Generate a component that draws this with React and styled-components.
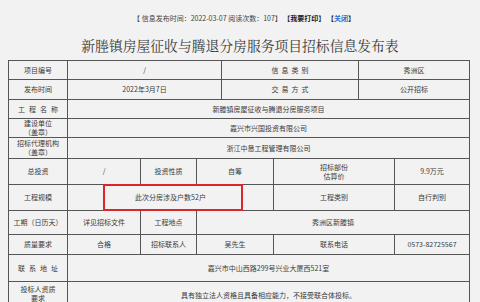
import React from "react";
import styled, { createGlobalStyle } from "styled-components";

const Global = createGlobalStyle`
  html, body { margin: 0; padding: 0; background: #f2f2f2; }
  body { font-family: "Noto Sans CJK SC", "Liberation Sans", sans-serif; color: #333; }
`;

const Page = styled.div`
  width: 480px;
  height: 302px;
  overflow: hidden;
  padding-top: 13px;
  box-sizing: border-box;
`;

const InfoLine = styled.div`
  text-align: center;
  font-size: 7px;
  line-height: 10px;
  color: #444;
  padding-left: 8px;
`;

const Strong = styled.span`
  font-weight: bold;
  color: #222;
`;

const Blue = styled.span`
  color: #2a6fd0;
`;

const Title = styled.h1`
  margin: 0;
  padding: 14px 0 7px 0;
  text-align: center;
  font-family: "Noto Serif CJK SC", "Noto Sans CJK SC", serif;
  font-weight: normal;
  font-size: 13.8px;
  line-height: 16px;
  color: #3a3a3a;
`;

const Table = styled.div`
  margin-left: 8px;
  width: 461px;
  border-top: 1px solid #555;
  border-left: 1px solid #555;
`;

const Row = styled.div`
  display: grid;
  grid-template-columns: ${(p) => p.cols};
  height: ${(p) => p.h}px;
`;

const Cell = styled.div`
  position: relative;
  display: flex;
  align-items: ${(p) => (p.top ? "flex-start" : "center")};
  padding-top: ${(p) => (p.top ? "3px" : "0")};
  justify-content: center;
  text-align: center;
  border-right: 1px solid #555;
  border-bottom: 1px solid #555;
  font-size: 7px;
  line-height: 9px;
  color: #3a3a3a;
  white-space: pre-line;
  box-sizing: border-box;
`;

const Spaced = styled.span`
  letter-spacing: ${(p) => p.gap || 4}px;
  margin-right: -${(p) => p.gap || 4}px;
`;

const Highlight = styled.div`
  position: absolute;
  left: 35px;
  width: 140px;
  top: -1px;
  bottom: -1px;
  border: 2px solid #d8262b;
  box-sizing: border-box;
`;

const Four = "59px 154px 137px 111px";
const Two = "59px 402px";
const Six = "59px 73px 56px 77px 121px 75px";

export default function App() {
  return (
    <Page>
      <Global />
      <InfoLine>
        【 信息发布时间：2022-03-07 阅读次数：107】 <Strong>【我要打印】</Strong>{" "}
        <Strong>【<Blue>关闭</Blue>】</Strong>
      </InfoLine>
      <Title>新塍镇房屋征收与腾退分房服务项目招标信息发布表</Title>
      <Table>
        <Row cols={Four} h={19}>
          <Cell>项目编号</Cell>
          <Cell>/</Cell>
          <Cell><Spaced gap={3}>信息类别</Spaced></Cell>
          <Cell>秀洲区</Cell>
        </Row>
        <Row cols={Four} h={20}>
          <Cell>发布时间</Cell>
          <Cell>2022年3月7日</Cell>
          <Cell><Spaced gap={3}>交易方式</Spaced></Cell>
          <Cell>公开招标</Cell>
        </Row>
        <Row cols={Two} h={19}>
          <Cell><Spaced>工程名称</Spaced></Cell>
          <Cell>新塍镇房屋征收与腾退分房服务项目</Cell>
        </Row>
        <Row cols={Two} h={19}>
          <Cell>{"建设单位\n（盖章）"}</Cell>
          <Cell>嘉兴市兴国投资有限公司</Cell>
        </Row>
        <Row cols={Two} h={21}>
          <Cell>{"招标代理机构\n（盖章）"}</Cell>
          <Cell>浙江中恳工程管理有限公司</Cell>
        </Row>
        <Row cols={Six} h={26}>
          <Cell>总投资</Cell>
          <Cell>/</Cell>
          <Cell>投资性质</Cell>
          <Cell>自筹</Cell>
          <Cell>{"招标部份\n估算价"}</Cell>
          <Cell>9.9万元</Cell>
        </Row>
        <Row cols="59px 206px 121px 75px" h={26}>
          <Cell>工程规模</Cell>
          <Cell>
            此次分房涉及户数52户
            <Highlight />
          </Cell>
          <Cell>工程类别</Cell>
          <Cell>自行判别</Cell>
        </Row>
        <Row cols="59px 73px 56px 273px" h={24}>
          <Cell>工期（日历天）</Cell>
          <Cell>详见招标文件</Cell>
          <Cell>工程地点</Cell>
          <Cell>秀洲区新塍镇</Cell>
        </Row>
        <Row cols={Six} h={20}>
          <Cell>质量要求</Cell>
          <Cell>合格</Cell>
          <Cell>招标联系人</Cell>
          <Cell>吴先生</Cell>
          <Cell>联系电话</Cell>
          <Cell>0573-82725567</Cell>
        </Row>
        <Row cols={Two} h={27}>
          <Cell><Spaced>联系地址</Spaced></Cell>
          <Cell>嘉兴市中山西路299号兴业大厦西521室</Cell>
        </Row>
        <Row cols={Two} h={28}>
          <Cell top>{"投标人资质\n要求"}</Cell>
          <Cell>具有独立法人资格且具备相应能力，不接受联合体投标。</Cell>
        </Row>
      </Table>
    </Page>
  );
}
